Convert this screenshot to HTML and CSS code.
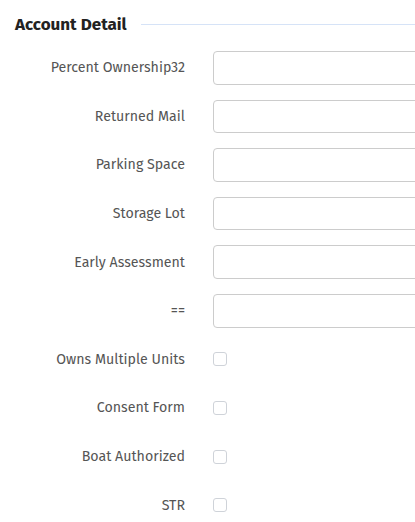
FILE: index.html
```html
<!DOCTYPE html>
<html>
<head>
<meta charset="utf-8">
<link rel="stylesheet" href="styles.css">
</head>
<body>
<div class="section">
  <div class="section-head">
    <h2 class="section-title">Account Detail</h2>
    <div class="section-rule"></div>
  </div>
  <div class="form">
    <label class="lbl">Percent Ownership32</label><div class="ctl"><input class="txt" type="text"></div>
    <label class="lbl">Returned Mail</label><div class="ctl"><input class="txt" type="text"></div>
    <label class="lbl">Parking Space</label><div class="ctl"><input class="txt" type="text"></div>
    <label class="lbl">Storage Lot</label><div class="ctl"><input class="txt" type="text"></div>
    <label class="lbl">Early Assessment</label><div class="ctl"><input class="txt" type="text"></div>
    <label class="lbl">==</label><div class="ctl"><input class="txt" type="text"></div>
    <label class="lbl">Owns Multiple Units</label><div class="ctl"><span class="chk"></span></div>
    <label class="lbl">Consent Form</label><div class="ctl"><span class="chk"></span></div>
    <label class="lbl">Boat Authorized</label><div class="ctl"><span class="chk"></span></div>
    <label class="lbl">STR</label><div class="ctl"><span class="chk"></span></div>
  </div>
</div>
</body>
</html>
```
FILE: styles.css
```css
html, body {
  margin: 0;
  padding: 0;
  background: #ffffff;
  overflow: hidden;
}
body {
  font-family: "Fira Sans", "Open Sans", "Noto Sans", sans-serif;
  color: #555;
}
.section {
  padding: 12px 0 0 15px;
  width: 500px;
}
.section-head {
  display: flex;
  align-items: center;
  gap: 14px;
  height: 24px;
}
.section-title {
  margin: 0;
  font-size: 17px;
  font-weight: 700;
  color: #222;
  white-space: nowrap;
}
.section-rule {
  flex: 1;
  height: 1px;
  background: #d6e3f7;
}
.form {
  margin-top: 15px;
  display: grid;
  grid-template-columns: 170px 1fr;
  column-gap: 28px;
  row-gap: 15px;
  grid-auto-rows: 33.6px;
}
.lbl {
  display: flex;
  align-items: center;
  justify-content: flex-end;
  font-size: 14.2px;
  color: #555;
  white-space: nowrap;
}
.ctl {
  display: flex;
  align-items: center;
}
.txt {
  box-sizing: border-box;
  width: 100%;
  height: 33.6px;
  border: 1px solid #ccc;
  border-radius: 4px;
  background: #fff;
  margin: 0;
}
.chk {
  box-sizing: border-box;
  width: 14px;
  height: 14px;
  border: 1px solid #cfd3d9;
  border-radius: 3px;
  background: #fff;
}
```
